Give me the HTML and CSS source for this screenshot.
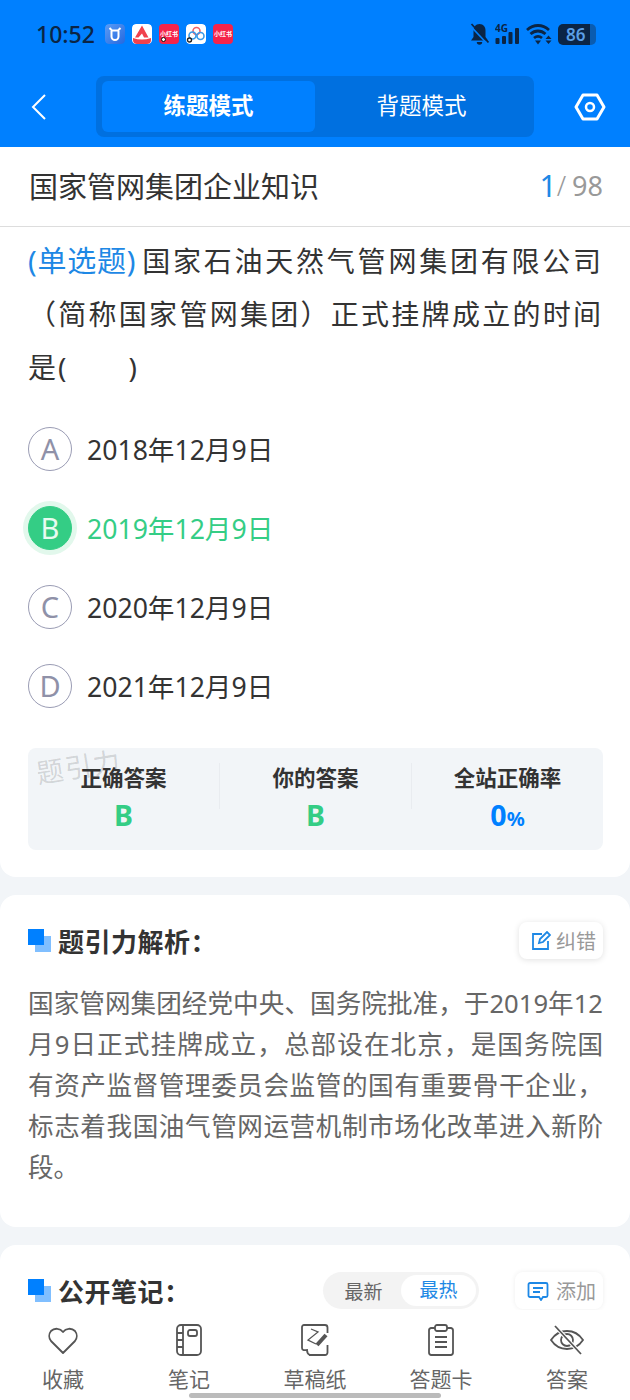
FILE: index.html
```html
<!DOCTYPE html>
<html lang="zh-CN">
<head>
  <meta charset="UTF-8" />
  <title>练题模式</title>
  <link rel="stylesheet" href="styles.css">
</head>
<body>
  <header class="top">
    <div class="status">
      <span class="time">10:52</span>
      <div class="apps">
        <svg class="app" viewBox="0 0 20 20"><defs><linearGradient id="g1" x1="0" y1="0" x2="1" y2="1"><stop offset="0" stop-color="#5a9cf5"/><stop offset="1" stop-color="#2468e0"/></linearGradient></defs><rect width="20" height="20" rx="4" fill="url(#g1)"/><path d="M6.500 7v5.500a3.500 3.500 0 0 0 7 0V7M4.500 4l2.500 2.500h6L15.500 4" fill="none" stroke="#fff" stroke-width="2"/></svg>
        <svg class="app" viewBox="0 0 20 20"><rect width="20" height="20" rx="4" fill="#fff"/><path d="M10 1.500l6.500 12h-4.500l-2-4-3.500 4H3z" fill="#f0414d"/><path d="M1 14c6 2 12 2 18 0v2a4 4 0 0 1-4 4H5a4 4 0 0 1-4-4z" fill="#f0414d"/></svg>
        <span class="app red">小红书<i class="dot"></i></span>
        <svg class="app" viewBox="0 0 20 20"><rect width="20" height="20" rx="4" fill="#fff"/><circle cx="10.500" cy="7" r="3.500" fill="none" stroke="#f0606a" stroke-width="1.600"/><circle cx="6.500" cy="11.500" r="3.500" fill="none" stroke="#3a9ae8" stroke-width="1.600"/><circle cx="14.500" cy="12" r="3.500" fill="none" stroke="#3a9ae8" stroke-width="1.600"/><circle cx="3.500" cy="16" r="2" fill="#fff" stroke="#222" stroke-width="1.400"/></svg>
        <span class="app red">小红书</span>
      </div>
      <div class="sys">
        <svg width="19" height="22" viewBox="0 0 19 22"><path d="M9.500 1C5.500 1 3.500 4 3.500 7.500V14L1 17.500h17L15.500 14V7.500C15.500 4 13.500 1 9.500 1zM6.800 19h5.400a2.700 2.700 0 0 1-5.400 0z" fill="#0b2545"/><path d="M0 2.500l17 18" stroke="#0080ff" stroke-width="1.800"/><path d="M1.500 1l17 18.500" stroke="#0b2545" stroke-width="1.800"/></svg>
        <svg width="25" height="30" viewBox="0 -4 25 30"><text x="0" y="8.500" class="net">4G</text><rect x="0.500" y="15" width="4" height="6" rx="1" fill="#0b2545"/><rect x="7" y="13" width="4" height="8" rx="1" fill="#0b2545"/><rect x="13.500" y="9" width="4" height="12" rx="1" fill="#0b2545"/><rect x="20" y="5" width="4" height="16" rx="1" fill="#0b2545"/></svg>
        <svg width="26" height="22" viewBox="0 0 26 22"><path d="M1 7c6.500-6 15.500-6 22 0M4.500 11c4.500-4 10.500-4 15 0M8 15c2.500-2 5.500-2 8 0" fill="none" stroke="#0b2545" stroke-width="2.800"/><path d="M9 17.500h6L12 21.500z" fill="#0b2545"/><path d="M19.500 16l3-3.500 3 3.500zM19.500 17.500h6l-3 3.500z" fill="#0b2545"/></svg>
        <span class="batt">86</span>
      </div>
    </div>
    <nav class="bar">
      <svg class="back" width="16" height="28" viewBox="0 0 16 28"><path d="M14 2L2 14l12 12" fill="none" stroke="#fff" stroke-width="2"/></svg>
      <div class="seg">
        <span class="seg-item on">练题模式</span>
        <span class="seg-item">背题模式</span>
      </div>
      <svg class="gear" width="32" height="28" viewBox="0 0 32 28"><path d="M9 2h14l7 12-7 12H9L2 14z" fill="none" stroke="#fff" stroke-width="3" stroke-linejoin="round"/><circle cx="16" cy="14" r="4" fill="none" stroke="#fff" stroke-width="2.500"/></svg>
    </nav>
  </header>

  <main>
    <section class="card first">
      <div class="title-row">
        <h2>国家管网集团企业知识</h2>
        <div class="count"><b>1</b><i>/</i>98</div>
      </div>
      <div class="q-body">
        <p class="question"><span class="tag">(单选题)</span>国家石油天然气管网集团有限公司（简称国家管网集团）正式挂牌成立的时间是(　　)</p>
        <ul class="opts">
          <li class="opt"><span class="letter">A</span>2018年12月9日</li>
          <li class="opt right"><span class="letter">B</span>2019年12月9日</li>
          <li class="opt"><span class="letter">C</span>2020年12月9日</li>
          <li class="opt"><span class="letter">D</span>2021年12月9日</li>
        </ul>
        <div class="stats">
          <span class="mark">题引力</span>
          <div class="stat"><div class="stat-k">正确答案</div><div class="stat-v green">B</div></div>
          <div class="stat"><div class="stat-k">你的答案</div><div class="stat-v green">B</div></div>
          <div class="stat"><div class="stat-k">全站正确率</div><div class="stat-v blue">0<small>%</small></div></div>
        </div>
      </div>
    </section>

    <section class="card">
      <div class="sec-head">
        <i class="sq"></i>
        <h3>题引力解析：</h3>
        <span class="chip">
          <svg width="20" height="20" viewBox="0 0 20 20"><path d="M17 10v8H2V3h9" fill="none" stroke="#1e88e5" stroke-width="1.800"/><path d="M8 12l1-4 7-7 3 3-7 7z" fill="none" stroke="#1e88e5" stroke-width="1.800"/></svg>
          纠错
        </span>
      </div>
      <p class="explain">国家管网集团经党中央、国务院批准，于2019年12月9日正式挂牌成立，总部设在北京，是国务院国有资产监督管理委员会监管的国有重要骨干企业，标志着我国油气管网运营机制市场化改革进入新阶段。</p>
    </section>

    <section class="card">
      <div class="sec-head">
        <i class="sq"></i>
        <h3>公开笔记：</h3>
        <div class="sort"><span>最新</span><span class="sort-on">最热</span></div>
        <span class="chip add">
          <svg width="22" height="20" viewBox="0 0 22 20"><path d="M3 2h16a1.500 1.500 0 0 1 1.500 1.500v11a1.500 1.500 0 0 1-1.500 1.500h-3l-2 3-2-3H3a1.500 1.500 0 0 1-1.500-1.500v-11A1.500 1.500 0 0 1 3 2z" fill="none" stroke="#1e88e5" stroke-width="1.800"/><path d="M6 7h10M6 11h7" stroke="#1e88e5" stroke-width="1.800"/></svg>
          添加
        </span>
      </div>
    </section>
  </main>

  <footer class="tabs">
    <div class="tab">
      <svg width="32" height="32" viewBox="0 0 32 32"><path d="M16 29L4 17a8 8 0 0 1 0-10 8 8 0 0 1 12 1 8 8 0 0 1 12-1 8 8 0 0 1 0 10z" fill="none" stroke="#555" stroke-width="1.800" stroke-linejoin="round"/></svg>
      <span>收藏</span>
    </div>
    <div class="tab">
      <svg width="28" height="32" viewBox="0 0 28 32"><rect x="2" y="1" width="24" height="30" rx="4" fill="none" stroke="#555" stroke-width="1.800"/><path d="M8 1v30M2 9h6M2 16h6M2 23h6" fill="none" stroke="#555" stroke-width="1.800"/><rect x="13" y="6" width="9" height="6" rx="2" fill="none" stroke="#555" stroke-width="1.800"/></svg>
      <span>笔记</span>
    </div>
    <div class="tab">
      <svg width="30" height="32" viewBox="0 0 30 32"><path d="M9 31h16a2.500 2.500 0 0 0 2.500-2.500V21M27.500 9V3.500A2.500 2.500 0 0 0 25 1H4a2 2 0 0 0-2 2v21" fill="none" stroke="#555" stroke-width="1.800"/><path d="M2 24c0 3 4 2 5 2 0 2 0 4 3 5" fill="none" stroke="#555" stroke-width="1.800"/><path d="M11 5l7 3-10 8 8 4" fill="none" stroke="#555" stroke-width="1.300"/><path d="M17 21l9-10" stroke="#555" stroke-width="4"/></svg>
      <span>草稿纸</span>
    </div>
    <div class="tab">
      <svg width="28" height="32" viewBox="0 0 28 32"><path d="M8 4H4a2.500 2.500 0 0 0-2 2.500v22A2.500 2.500 0 0 0 4 31h20a2.500 2.500 0 0 0 2-2.500v-22A2.500 2.500 0 0 0 24 4h-4" fill="none" stroke="#555" stroke-width="1.800"/><rect x="8" y="1" width="12" height="6" rx="2" fill="none" stroke="#555" stroke-width="1.800"/><path d="M8 13h12M8 18h12M8 23h12" stroke="#555" stroke-width="1.800"/></svg>
      <span>答题卡</span>
    </div>
    <div class="tab">
      <svg width="36" height="32" viewBox="0 0 36 32"><path d="M2 16c8-12 24-12 32 0-8 12-24 12-32 0z" fill="none" stroke="#555" stroke-width="1.800"/><circle cx="18" cy="16" r="6" fill="none" stroke="#555" stroke-width="1.800"/><path d="M6 2l26 28" stroke="#fff" stroke-width="4"/><path d="M6 2l26 28" stroke="#555" stroke-width="1.800"/></svg>
      <span>答案</span>
    </div>
    <i class="home-bar"></i>
  </footer>
</body>
</html>
```

FILE: styles.css
```css
* { box-sizing:border-box; }
html, body { height:1400px; overflow:hidden; }
body { margin:0; background:#f2f5f8; color:#333; font-family:"Noto Sans","Noto Sans CJK SC",sans-serif; position:relative; }
h2, h3, p, ul { margin:0; padding:0; }
ul { list-style:none; }

.top { background:#0080ff; height:147px; }
.status { height:68px; display:flex; align-items:center; padding:0 34px 0 36px; }
.time { font-size:23px; font-weight:500; color:#0b2545; width:69px; }
.apps { display:flex; gap:7px; }
.app { width:20px; height:20px; border-radius:4px; display:block; }
.red { background:#f5244a; color:#fff; font-size:6px; line-height:20px; text-align:center; white-space:nowrap; overflow:hidden; position:relative; font-weight:700; }
.dot { position:absolute; left:2px; bottom:2px; width:5px; height:5px; border-radius:50%; background:#fff; border:1.500px solid #111; }
.sys { margin-left:auto; display:flex; align-items:center; gap:6px; }
.net { font-size:10px; font-weight:700; fill:#0b2545; }
.batt { width:38px; height:21px; background:linear-gradient(90deg,#0b2545 84%,#0a5cb0 84%); border-radius:5px; color:#5b9fe6; font-size:17px; font-weight:600; line-height:21px; padding-left:8px; }

.bar { height:79px; display:flex; align-items:flex-start; padding:8px 24px 0 31px; }
.back { margin-top:17px; }
.seg { margin-left:49px; width:438px; height:61px; background:#0070e0; border-radius:8px; padding:5px 6px; display:flex; }
.seg-item { flex:1; display:flex; align-items:center; justify-content:center; color:#fff; font-size:22.500px; border-radius:6px; padding-bottom:4px; }
.seg-item.on { background:#0080ff; font-weight:700; }
.gear { margin:17px 0 0 auto; }

.card { background:#fff; border-radius:16px; padding:0 27px 0 28px; margin-bottom:18px; }
.first { border-radius:0 0 16px 16px; padding:0; height:730px; }
.title-row { height:80px; border-bottom:1px solid #ddd; display:flex; align-items:center; justify-content:space-between; padding:0 27px 3px 29px; }
.title-row h2 { font-size:29px; font-weight:400; }
.count { color:#999; font-size:27px; display:flex; align-items:center; }
.count b { color:#1e88e5; font-size:30px; font-weight:400; }
.count i { font-style:normal; font-weight:300; margin-right:6px; }
.q-body { padding:7px 27px 0 28px; }
.question { font-size:28px; line-height:53px; letter-spacing:2px; height:163px; text-align:justify; }
.tag { color:#1e88e5; letter-spacing:0; font-size:29px; margin-right:6px; }
.opts { margin-top:12px; }
.opt { height:79px; display:flex; align-items:center; gap:15px; font-size:26.600px; }
.letter { width:44px; height:44px; flex:none; border-radius:50%; border:1.500px solid #9a9cb4; color:#8f91a8; font-size:29px; display:flex; align-items:center; justify-content:center; }
.right { color:#34cd85; }
.right .letter { background:#34cd85; border-color:#34cd85; color:#e8fbf0; box-shadow:0 0 0 5px #e2f8ec; }
.stats { position:relative; margin-top:23px; height:102px; background:#f2f5f8; border-radius:8px; display:flex; padding-top:15px; }
.mark { position:absolute; left:8px; top:-2px; font-size:27px; color:rgba(0,0,0,.15); transform:rotate(-9deg); letter-spacing:1.500px; }
.stat { flex:1; text-align:center; border-right:1px solid #e9ecf0; height:46px; position:relative; }
.stat:last-child { border-right:0; }
.stat-k { font-size:21.500px; font-weight:700; line-height:30px; height:30px; }
.stat-v { font-size:28.500px; font-weight:700; line-height:40px; margin-top:2px; }
.stat-v small { font-size:20px; }
.green { color:#34cd85; }
.blue { color:#0080ff; }

.sec-head { height:88px; display:flex; align-items:center; padding-top:3px; }
.sq { width:23px; height:23px; position:relative; display:block; margin-right:7px; }
.sq::before { content:""; position:absolute; right:0; bottom:0; width:16px; height:16px; background:#80bfff; }
.sq::after { content:""; position:absolute; left:0; top:0; width:16px; height:16px; background:#0080ff; }
.sec-head h3 { font-size:26px; font-weight:700; letter-spacing:.5px; }
.chip { margin-left:auto; height:37px; width:84px; border-radius:8px; background:#fff; box-shadow:0 1px 6px rgba(0,0,0,.12); color:#999; font-size:20px; display:flex; align-items:center; padding-left:12px; gap:5px; }
.sort { margin-left:auto; width:156px; height:37px; border-radius:19px; background:#f3f3f3; display:flex; align-items:center; padding:3px; font-size:19px; color:#666; }
.sort span { flex:1; text-align:center; }
.sort .sort-on { background:#fff; color:#1e88e5; border-radius:16px; line-height:31px; }
.add { margin-left:36px; width:88px; gap:7px; box-shadow:0 0 5px rgba(0,0,0,.07); }
.explain { font-size:25.600px; line-height:41px; color:#666; padding-bottom:39px; text-align:justify; }

.tabs { position:absolute; left:0; right:0; bottom:0; height:90px; background:#fff; display:grid; grid-template-columns:repeat(5,126px); padding-top:14px; }
.tab { display:flex; flex-direction:column; align-items:center; color:#666; font-size:21px; }
.tab svg { height:32px; }
.tab span { margin-top:8px; line-height:30px; }
.home-bar { position:absolute; left:189px; bottom:2px; width:252px; height:5px; border-radius:3px; background:#bbb; }
```
